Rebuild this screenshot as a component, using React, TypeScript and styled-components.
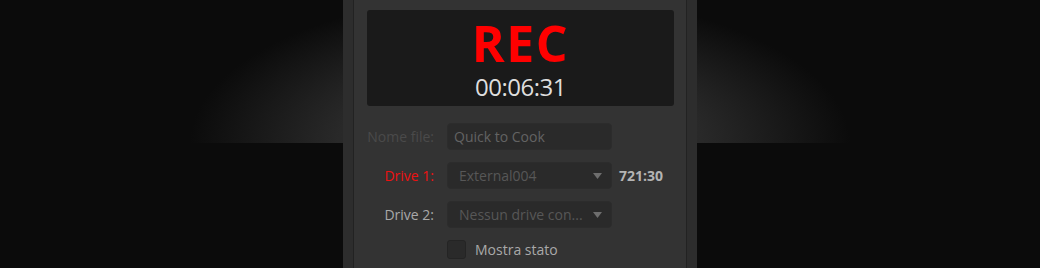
import React from 'react';
import styled, { createGlobalStyle } from 'styled-components';

const GlobalStyle = createGlobalStyle`
  html, body {
    margin: 0;
    padding: 0;
    background: #0b0b0b;
  }
  body {
    font-family: "Open Sans", "Noto Sans", sans-serif;
  }
`;

type Tone = 'disabled' | 'alert' | 'normal';

const labelColors: Record<Tone, string> = {
  disabled: '#4a4a4a',
  alert: '#ee1111',
  normal: '#a9a9a9',
};

const Caret = () => (
  <svg width="9" height="6" viewBox="0 0 9 6">
    <polygon points="0,0 9,0 4.5,6" fill="#6e6e6e" />
  </svg>
);

const App: React.FC = () => {
  return (
    <Stage>
      <GlobalStyle />
      <Frame>
        <Body>
          <RecordDisplay>
            <RecLabel>REC</RecLabel>
            <Timecode>00:06:31</Timecode>
          </RecordDisplay>

          <Form>
            <Row>
              <Label tone="disabled">Nome file:</Label>
              <TextField>Quick to Cook</TextField>
            </Row>
            <Row>
              <Label tone="alert">Drive 1:</Label>
              <Select>
                <SelectValue>External004</SelectValue>
                <Caret />
              </Select>
              <Remaining>721:30</Remaining>
            </Row>
            <Row>
              <Label tone="normal">Drive 2:</Label>
              <Select>
                <SelectValue>Nessun drive con...</SelectValue>
                <Caret />
              </Select>
            </Row>
            <CheckRow>
              <Checkbox />
              <CheckText>Mostra stato</CheckText>
            </CheckRow>
          </Form>
        </Body>
      </Frame>
    </Stage>
  );
};

export default App;

const Stage = styled.div`
  display: flex;
  justify-content: center;
  height: 268px;
  overflow: hidden;
  background-color: #0b0b0b;
  background-image: radial-gradient(
    ellipse 330px 150px at 50% 100%,
    #303030 0%,
    #292929 55%,
    #0b0b0b 100%
  );
  background-size: 100% 143px;
  background-repeat: no-repeat;
`;

const Frame = styled.div`
  width: 354px;
  height: 268px;
  box-sizing: border-box;
  padding: 0 10px;
  background: #2d2d2d;
`;

const Body = styled.div`
  height: 100%;
  box-sizing: border-box;
  padding: 10px 12px 0 13px;
  background: #333333;
  border-left: 1px solid #222222;
  border-right: 1px solid #222222;
`;

const RecordDisplay = styled.div`
  height: 96px;
  box-sizing: border-box;
  display: flex;
  flex-direction: column;
  align-items: center;
  padding-top: 13px;
  background: #1a1a1a;
  border-radius: 3px;
`;

const RecLabel = styled.div`
  font-size: 50px;
  font-weight: 700;
  line-height: 40px;
  letter-spacing: 1.5px;
  color: #ff0000;
`;

const Timecode = styled.div`
  margin-top: 10px;
  font-size: 24px;
  line-height: 28px;
  letter-spacing: -0.5px;
  color: #dedede;
`;

const Form = styled.div`
  display: flex;
  flex-direction: column;
  gap: 12px;
  margin-top: 17px;
`;

const Row = styled.div`
  display: flex;
  align-items: center;
  height: 27px;
`;

const Label = styled.div<{ tone: Tone }>`
  width: 67px;
  margin-right: 13px;
  text-align: right;
  font-size: 14px;
  color: ${({ tone }) => labelColors[tone]};
  white-space: nowrap;
`;

const Field = styled.div`
  width: 165px;
  height: 27px;
  box-sizing: border-box;
  display: flex;
  align-items: center;
  background: #2a2a2a;
  border: 1px solid #2c2c2c;
  border-radius: 4px;
  font-size: 14px;
`;

const TextField = styled(Field)`
  padding: 0 6px;
  color: #636363;
`;

const Select = styled(Field)`
  padding: 0 9px 0 11px;
  gap: 8px;
`;

const SelectValue = styled.span`
  flex: 1;
  min-width: 0;
  white-space: nowrap;
  color: #575757;
`;

const Remaining = styled.span`
  margin-left: 7px;
  font-size: 14px;
  font-weight: 700;
  color: #b4b4b4;
`;

const CheckRow = styled.label`
  display: flex;
  align-items: center;
  gap: 9px;
  height: 19px;
  padding-left: 80px;
`;

const Checkbox = styled.span`
  width: 19px;
  height: 19px;
  box-sizing: border-box;
  background: #2a2a2a;
  border: 1px solid #242424;
  border-radius: 3px;
`;

const CheckText = styled.span`
  font-size: 14px;
  color: #a9a9a9;
`;
